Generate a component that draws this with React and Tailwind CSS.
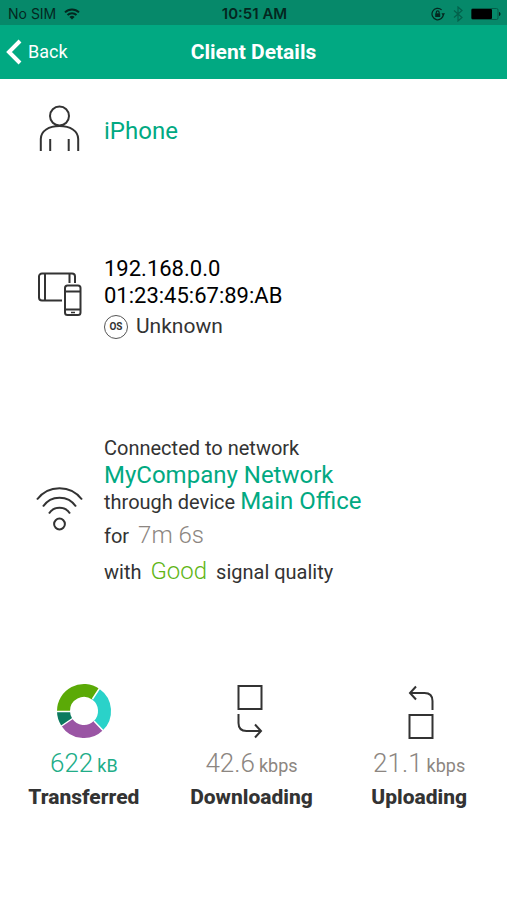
import { useState } from "react";

const CLIENT = {
  name: "iPhone",
  ip: "192.168.0.0",
  mac: "01:23:45:67:89:AB",
  os: "Unknown",
  network: "MyCompany Network",
  device: "Main Office",
  duration: "7m 6s",
  signal: "Good",
};

function StatusBar() {
  return (
    <div className="grid h-[25px] grid-cols-3 items-center bg-[#06896a] pt-[3px] pr-1.5 pl-2 font-['Inter','Liberation_Sans',sans-serif] text-sm leading-5 text-[#04271f]">
      <div className="flex items-center gap-2">
        <span>No SIM</span>
        <svg className="h-3 w-4" viewBox="0 0 16 12" fill="none" stroke="currentColor" strokeWidth="2">
          <path d="M1 4.4a10 10 0 0 1 14 0M3.5 7a6.4 6.4 0 0 1 9 0" />
          <path d="M8 11.6L5.4 9a3.7 3.7 0 0 1 5.2 0z" fill="currentColor" stroke="none" />
        </svg>
      </div>
      <span className="text-center text-[15px] leading-5 font-semibold whitespace-nowrap">10:51 AM</span>
      <div className="flex items-center justify-end gap-2">
        <svg className="h-[14px] w-[14px]" viewBox="0 0 14 14" fill="none" stroke="currentColor" strokeWidth="1.2">
          <path d="M12.4 7a5.7 5.7 0 1 1-1.8-4.1" />
          <path d="M10.4 6.200h3.600L12.300 9z" fill="currentColor" stroke="none" />
          <rect x="4.2" y="6.3" width="5" height="3.7" fill="currentColor" stroke="none" />
          <path d="M5.3 6.5V5.2a1.4 1.4 0 0 1 2.8 0v1.3" />
        </svg>
        <svg className="h-4 w-[10px] text-[#03614b]" viewBox="0 0 10 16" fill="none" stroke="currentColor" strokeWidth="1.2">
          <path d="M1 4.5l8 7L5 15V1l4 3.5-8 7" />
        </svg>
        <svg className="h-3 w-[30px]" viewBox="0 0 30 12">
          <rect x="0.5" y="0.5" width="26.5" height="11" rx="1.5" fill="none" stroke="#045c47" />
          <rect x="0.5" y="1" width="20.5" height="10" rx="1" fill="#000" />
          <path d="M28 4c2 .5 2 3.500 0 4z" fill="#04271f" />
        </svg>
      </div>
    </div>
  );
}

function PersonIcon() {
  return (
    <svg className="h-12 w-12" viewBox="0 0 48 48" fill="none" stroke="#333" strokeWidth="2">
      <circle cx="23.500" cy="11" r="9.500" />
      <path d="M4.800 46V34c0-8 8-13 18.700-13s18.700 5 18.700 13v12M14.200 34v12M32.700 34v12" />
    </svg>
  );
}

function DevicesIcon() {
  return (
    <svg className="h-12 w-12" viewBox="0 0 48 48" fill="none" stroke="#333" strokeWidth="2">
      <path d="M26 28.500H6a3 3 0 0 1-3-3V4.500a3 3 0 0 1 3-3h30a3 3 0 0 1 3 3V11M9 1.500v27M33.500 1.500V11" />
      <rect x="29" y="13.500" width="15.500" height="29.500" rx="2.500" />
      <path d="M29 19.500h15.500M29 37.500h15.500" />
      <path d="M35 40.500h4" strokeWidth="1.500" />
    </svg>
  );
}

function SignalIcon() {
  return (
    <svg className="h-12 w-12" viewBox="0 0 48 48" fill="none" stroke="#333" strokeWidth="2">
      <path d="M1 13.500a28 28 0 0 1 45 0M7 20.500a19.800 19.800 0 0 1 33 0M13 27.500a12.500 12.500 0 0 1 21 0" />
      <circle cx="23.500" cy="38" r="5.400" />
    </svg>
  );
}

function UsageChart() {
  return (
    <svg className="h-14 w-14" viewBox="0 0 56 56" fill="none" strokeWidth="13">
      <path d="M7.500 28A20.500 20.500 0 0 1 39.800 11.200" stroke="#5baa07" />
      <path d="M39.800 11.200A20.500 20.500 0 0 1 42.200 42.800" stroke="#2ad2c9" />
      <path d="M42.200 42.800A20.500 20.500 0 0 1 10.900 39.300" stroke="#9a55a4" />
      <path d="M10.900 39.300A20.500 20.500 0 0 1 7.500 28" stroke="#0b7a5f" />
      <path d="M0 28.500h16M36.500 16L45 3M38 38l9 9.500M18 34.500L4 44" stroke="#fff" strokeWidth="1.500" />
    </svg>
  );
}

function DownloadIcon() {
  return (
    <svg className="h-14 w-14" viewBox="0 0 56 56" fill="none" stroke="#333" strokeWidth="2">
      <path d="M15.500 3h23v23h-23zM15.500 31v9q0 8 8 8H38M32 41.500l6 6.500-6 6.500" />
    </svg>
  );
}

function UploadIcon() {
  return (
    <svg className="h-14 w-14" viewBox="0 0 56 56" fill="none" stroke="#333" strokeWidth="2">
      <path d="M18.500 32h23v23h-23zM41.500 27v-9q0-8-8-8H19M25 3.500L19 10l6 6.500" />
    </svg>
  );
}

function Row({ icon, children }) {
  return (
    <section className="flex items-center gap-5 px-9 text-[#333]">
      <div className="shrink-0 pb-1">{icon}</div>
      <div>{children}</div>
    </section>
  );
}

function Stat({ icon, value, unit, label, color }) {
  return (
    <div className="flex flex-col items-center">
      {icon}
      <p className={`mt-2 flex items-baseline gap-1 leading-8 ${color}`}>
        <span className="text-[26px] leading-8 font-light">{value}</span>
        <span className="text-lg leading-6">{unit}</span>
      </p>
      <p className="mt-1 text-[21px] leading-7 font-extrabold text-[#333]">{label}</p>
    </div>
  );
}

export default function App() {
  const [client] = useState(CLIENT);

  return (
    <div className="min-h-screen bg-white font-['Roboto','Noto_Sans',sans-serif]">
      <header className="bg-[#01a982] text-white">
        <StatusBar />
        <div className="grid h-[54px] grid-cols-[1fr_auto_1fr] items-center px-1">
          <button type="button" className="flex items-center gap-1 text-lg leading-7">
            <svg className="h-7 w-5" viewBox="0 0 20 28" fill="none" stroke="currentColor" strokeWidth="4">
              <path d="M16 3L5 14l11 11" />
            </svg>
            Back
          </button>
          <h1 className="text-[21px] leading-7 font-bold">Client Details</h1>
        </div>
      </header>

      <main className="pt-[26px]">
        <Row icon={<PersonIcon />}>
          <p className="text-2xl leading-7 text-[#01a982]">{client.name}</p>
        </Row>

        <div className="mt-[98px]">
          <Row icon={<DevicesIcon />}>
            <p className="text-[22px] leading-[27px] text-black">{client.ip}</p>
            <p className="text-[22px] leading-[27px] text-black">{client.mac}</p>
            <p className="mt-1 flex items-center gap-2 text-[21px] leading-[27px]">
              <span className="flex h-6 w-6 items-center justify-center rounded-full border border-[#555] text-[10px] leading-3 font-bold">
                OS
              </span>
              {client.os}
            </p>
          </Row>
        </div>

        <div className="mt-[95px]">
          <Row icon={<SignalIcon />}>
            <p className="text-xl leading-[27px]">Connected to network</p>
            <p className="text-2xl leading-[27px] text-[#01a982]">{client.network}</p>
            <p className="text-xl leading-[27px]">
              through device <span className="text-2xl leading-6 text-[#01a982]">{client.device}</span>
            </p>
            <p className="mt-1 text-xl leading-8">
              for <span className="mx-1 text-2xl leading-6 font-light text-[#8c8681]">{client.duration}</span>
            </p>
            <p className="mt-1 text-xl leading-8">
              with <span className="mx-1 text-2xl leading-6 font-light text-[#61b515]">{client.signal}</span> signal quality
            </p>
          </Row>
        </div>

        <div className="mt-[95px] grid grid-cols-3 pr-1 pb-8">
          <Stat icon={<UsageChart />} value="622" unit="kB" label="Transferred" color="text-[#21ad88]" />
          <Stat icon={<DownloadIcon />} value="42.6" unit="kbps" label="Downloading" color="text-[#8c8681]" />
          <Stat icon={<UploadIcon />} value="21.1" unit="kbps" label="Uploading" color="text-[#8c8681]" />
        </div>
      </main>
    </div>
  );
}
